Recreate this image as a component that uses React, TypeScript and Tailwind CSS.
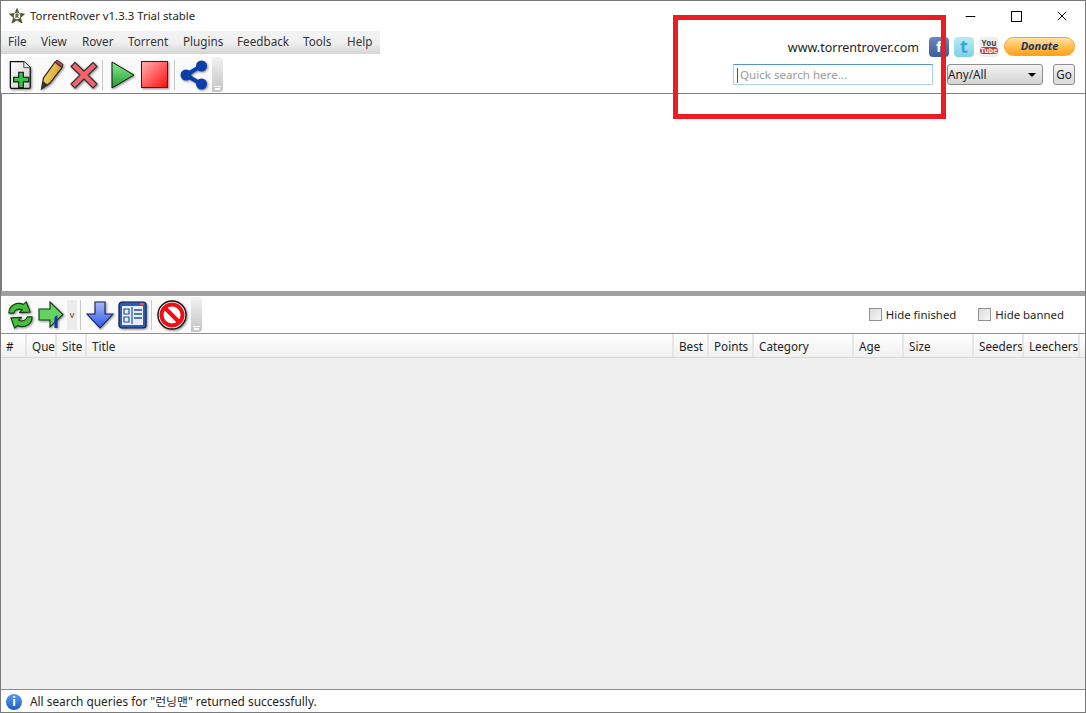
import { Minus, X } from "lucide-react";

const font = { fontFamily: '"Noto Sans", "Noto Sans CJK KR", sans-serif' };

const menus = [
  { label: "File", cls: "w-[33px]" },
  { label: "View", cls: "w-[41px]" },
  { label: "Rover", cls: "w-[46px]" },
  { label: "Torrent", cls: "w-[55px]" },
  { label: "Plugins", cls: "w-[54px]" },
  { label: "Feedback", cls: "w-[66px]" },
  { label: "Tools", cls: "w-[44px]" },
  { label: "Help", cls: "w-[33px]" },
];

const columns = [
  { label: "#", cls: "w-[26px]" },
  { label: "Queue", cls: "w-[30px]" },
  { label: "Site", cls: "w-[30px]" },
  { label: "Title", cls: "w-[587px]" },
  { label: "Best", cls: "w-[35px]" },
  { label: "Points", cls: "w-[45px]" },
  { label: "Category", cls: "w-[100px]" },
  { label: "Age", cls: "w-[50px]" },
  { label: "Size", cls: "w-[70px]" },
  { label: "Seeders", cls: "w-[50px]" },
  { label: "Leechers", cls: "w-[56px]" },
];

const Sep = () => <div className="w-px h-[30px] bg-[#c8c8c8]" />;

// little grey overflow grip at the end of each toolbar
const Grip = () => (
  <div className="w-[11px] h-[35px] rounded-r-sm bg-gradient-to-b from-[#f2f2f2] to-[#c4c4c4] flex flex-col items-center justify-end pb-[2px]">
    <div className="w-[7px] h-px bg-white mb-[1px]" />
    <div className="w-[5px] h-[2px] bg-white" />
  </div>
);

const shadow = "drop-shadow-[1px_1px_1px_rgba(0,0,0,0.45)]";

const NewIcon = () => (
  <svg width="24" height="32" viewBox="0 0 26 32" className={shadow}>
    <defs>
      <linearGradient id="pg" x1="0" y1="0" x2="1" y2="1">
        <stop offset="0" stopColor="#ffffff" />
        <stop offset="1" stopColor="#c9c9c9" />
      </linearGradient>
    </defs>
    <path d="M1.5 1.5H16L23 8V29Q23 30.5 21.5 30.5H3Q1.5 30.5 1.5 29Z" fill="url(#pg)" stroke="#111" strokeWidth="1.4" />
    <path d="M16 1.5V8H23" fill="#e8e8e8" stroke="#444" strokeWidth="1" />
    <path d="M10.5 13H15.5V18.5H21.5V23.5H15.5V29.5H10.5V23.5H5V18.5H10.5Z" fill="#39c24a" stroke="#111" strokeWidth="1.2" />
  </svg>
);

const PencilIcon = () => (
  <svg width="24" height="32" viewBox="0 0 24 32" className={shadow}>
    <defs>
      <linearGradient id="pn" x1="0" y1="0" x2="1" y2="0.4">
        <stop offset="0" stopColor="#ffe58a" />
        <stop offset="1" stopColor="#d99a1e" />
      </linearGradient>
    </defs>
    <path d="M1.5 30L3.5 19L15 3L22 8.5L10 24Z" fill="url(#pn)" stroke="#222" strokeWidth="1.2" />
    <path d="M15 3L17 1L23 5.5L22 8.5Z" fill="#c23b45" stroke="#333" strokeWidth="1" />
    <path d="M1.5 30L3 22L8 26Z" fill="#3a3026" />
  </svg>
);

const CrossIcon = () => (
  <svg width="28" height="28" viewBox="0 0 28 28" className={shadow}>
    <path d="M5 1.5L14 10L23 1.5L27 5.5L18 14L27 23L23 27L14 18L5 27L1 23L10 14L1 5.5Z" fill="#f4646c" stroke="#333" strokeWidth="1.2" strokeLinejoin="round" />
  </svg>
);

const PlayIcon = () => (
  <svg width="24" height="28" viewBox="0 0 24 28" className={shadow}>
    <defs>
      <linearGradient id="pl" x1="0" y1="0" x2="0" y2="1">
        <stop offset="0" stopColor="#8ce88c" />
        <stop offset="1" stopColor="#1f9e2f" />
      </linearGradient>
    </defs>
    <path d="M1 1L23 14L1 27Z" fill="url(#pl)" stroke="#111" strokeWidth="1" />
  </svg>
);

const StopIcon = () => (
  <svg width="27" height="27" viewBox="0 0 27 27" className={shadow}>
    <defs>
      <linearGradient id="st" x1="0" y1="0" x2="1" y2="1">
        <stop offset="0" stopColor="#ffb4b4" />
        <stop offset="1" stopColor="#ff0c0c" />
      </linearGradient>
    </defs>
    <rect x="0.5" y="0.5" width="26" height="26" fill="url(#st)" stroke="#222" />
  </svg>
);

const ShareIcon = () => (
  <svg width="28" height="30" viewBox="0 0 28 30" className={shadow}>
    <path d="M21 6L6 15L21 24" fill="none" stroke="#0b3ea8" strokeWidth="4" />
    <circle cx="21.5" cy="6" r="5.5" fill="#0b3ea8" />
    <circle cx="6" cy="15" r="5.5" fill="#0b3ea8" />
    <circle cx="21.5" cy="24" r="5.5" fill="#0b3ea8" />
  </svg>
);

const RefreshIcon = () => (
  <svg width="29" height="30" viewBox="0 0 30 30" className={shadow}>
    <path d="M3 13C3 5 11 1 18 4L21 1.5L25 12L14 12.5L17 9.5C13 8 9 9.5 8 13Z" fill="#46c03c" stroke="#123d12" strokeWidth="1.2" strokeLinejoin="round" />
    <path d="M27 17C27 25 19 29 12 26L9 28.5L5 18L16 17.5L13 20.5C17 22 21 20.5 22 17Z" fill="#46c03c" stroke="#123d12" strokeWidth="1.2" strokeLinejoin="round" />
  </svg>
);

const ForwardIcon = () => (
  <svg width="26" height="28" viewBox="0 0 26 28" className={shadow}>
    <path d="M1 8H12V1L25 13.5L12 26V19H1Z" fill="#63d25f" stroke="#113d11" strokeWidth="1.1" />
    <path d="M16.5 27V16L19.5 14V27Z" fill="#1b2fb0" />
  </svg>
);

const DownIcon = () => (
  <svg width="28" height="28" viewBox="0 0 28 28" className={shadow}>
    <defs>
      <linearGradient id="dn" x1="0" y1="0" x2="0" y2="1">
        <stop offset="0" stopColor="#a6bcfb" />
        <stop offset="1" stopColor="#2f55e8" />
      </linearGradient>
    </defs>
    <path d="M9 1H19V13H27L14 27L1 13H9Z" fill="url(#dn)" stroke="#15204f" strokeWidth="1.1" />
  </svg>
);

const DetailsIcon = () => (
  <svg width="29" height="28" viewBox="0 0 29 28" className={shadow}>
    <rect x="1" y="1" width="27" height="26" rx="3" fill="#2d5cb4" stroke="#0e1e46" strokeWidth="1.2" />
    <rect x="4" y="5" width="21" height="19" fill="#e6effb" />
    <path d="M6 8H11V13H6ZM6 16H11V21H6Z" fill="none" stroke="#234c9c" strokeWidth="1.2" />
    <path d="M14 6V23" stroke="#234c9c" strokeWidth="1.2" />
    <path d="M16 9H24M16 13H24M16 17H24" stroke="#234c9c" strokeWidth="1.6" />
    <rect x="22" y="2" width="4" height="2" fill="#e25757" />
  </svg>
);

const BanIcon = () => (
  <svg width="30" height="30" viewBox="0 0 30 30" className={shadow}>
    <circle cx="15" cy="15" r="14" fill="#fff" stroke="#111" strokeWidth="1.4" />
    <circle cx="15" cy="15" r="10.5" fill="none" stroke="#ee0f14" strokeWidth="4" />
    <path d="M7.5 7.5L22.5 22.5" stroke="#ee0f14" strokeWidth="4" />
  </svg>
);

const LogoIcon = () => (
  <svg width="16" height="16" viewBox="0 0 16 16">
    <path d="M8 0.5L10 5.5L15.5 6L11.5 9.5L13 15L8 12L3 15L4.5 9.5L0.5 6L6 5.5Z" fill="#54691c" stroke="#222" strokeWidth="0.6" />
    <circle cx="8" cy="8" r="3.2" fill="#f7f7ef" />
    <path d="M7 6V10M7 6H9V8H7M8 8L9.5 10" fill="none" stroke="#222" strokeWidth="0.8" />
  </svg>
);

const Checkbox = () => (
  <div className="w-[13px] h-[13px] border border-[#8e8f8f] bg-gradient-to-br from-[#dcdcdc] to-[#f7f7f7]" />
);

export default function App() {
  return (
    <div
      className="relative w-[1086px] h-[713px] flex flex-col overflow-hidden bg-white border border-[#7a7a7a] text-[11.7px] text-[#1e1e1e]"
      style={font}
    >
      {/* header */}
      <div className="h-[92px] flex justify-between shrink-0">
        <div className="flex flex-col">
          <div className="h-[30px] flex items-center pl-[8px] gap-[5px] text-[11.4px]">
            <LogoIcon />
            <span>TorrentRover v1.3.3 Trial stable</span>
          </div>
          <div className="w-[379px] h-[23px] flex items-center pl-[7px] pb-[2px] bg-gradient-to-b from-[#f3f3f3] via-[#f0f0f0] to-[#d5d5d5] text-[#333]">
            {menus.map((m) => (
              <div key={m.label} className={m.cls}>
                {m.label}
              </div>
            ))}
          </div>
          <div className="flex items-center mt-[3px] pl-[3px]">
            <div className="flex items-center w-[208px] h-[35px] pl-[5px] bg-[#fafafa] rounded-l-sm">
              <NewIcon />
              <div className="ml-[7px]">
                <PencilIcon />
              </div>
              <div className="ml-[6px]">
                <CrossIcon />
              </div>
              <div className="ml-[4px]">
                <Sep />
              </div>
              <div className="ml-[8px]">
                <PlayIcon />
              </div>
              <div className="ml-[6px]">
                <StopIcon />
              </div>
              <div className="ml-[6px]">
                <Sep />
              </div>
              <div className="ml-[5px]">
                <ShareIcon />
              </div>
            </div>
            <Grip />
          </div>
        </div>

        <div className="flex flex-col items-end">
          <div className="flex">
            <div className="flex items-center justify-center w-[46px] h-[30px]">
              <Minus size={15} strokeWidth={1.7} className="text-black" />
            </div>
            <div className="flex items-center justify-center w-[46px] h-[30px]">
              <div className="w-[11px] h-[11px] border border-black" />
            </div>
            <div className="flex items-center justify-center w-[46px] h-[30px]">
              <X size={16} strokeWidth={1.5} className="text-black" />
            </div>
          </div>
          <div className="flex items-center mt-[5px] pr-[10px] h-[21px]">
            <span className="text-[12.5px] text-[#1c1c1c] mr-[10px] pt-[3px]">www.torrentrover.com</span>
            <div className="w-[20px] h-[20px] rounded-sm bg-gradient-to-b from-[#6d88bb] to-[#3e5b99] flex items-center justify-center text-white font-bold text-[15px] mr-[5px]">
              f
            </div>
            <div className="w-[20px] h-[20px] rounded-sm bg-gradient-to-b from-[#b8ecf2] to-[#7fd0e4] flex items-center justify-center text-[#3aa4d8] font-bold text-[18px] mr-[5px]">
              t
            </div>
            <div className="w-[20px] h-[20px] rounded-sm bg-[#eeeeee] flex flex-col items-center justify-center leading-none mr-[5px]">
              <span className="text-[8px] font-bold text-[#444]">You</span>
              <span className="text-[7px] font-bold text-white bg-[#c8383a] rounded-sm px-px">Tube</span>
            </div>
            <div className="w-[71px] h-[19px] rounded-full border border-[#f5a623] bg-gradient-to-b from-[#ffe2a6] via-[#ffc14d] to-[#ff9f1a] flex items-center justify-center italic font-bold text-[11px] text-[#17386e]">
              Donate
            </div>
          </div>
          <div className="flex items-center mt-[7px] pr-[10px]">
            <div className="w-[200px] h-[21px] border border-[#a9d3ee] border-t-[#5a93c6] flex items-center pl-[3px] pt-[1px] mr-[14px] text-[#9a9a9a] text-[11.6px]">
              <div className="w-px h-[15px] bg-[#555] mr-[2px]" />
              Quick search here...
            </div>
            <div className="w-[96px] h-[21px] border border-[#8d8d8d] rounded-[3px] bg-gradient-to-b from-[#f4f4f4] to-[#d2d2d2] flex items-center justify-between pt-[1px] pr-[6px] mr-[10px] text-[#222]">
              <span>Any/All</span>
              <div className="w-0 h-0 border-x-[4px] border-x-transparent border-t-[4px] border-t-black" />
            </div>
            <div className="w-[22px] h-[21px] border border-[#8d8d8d] rounded-[3px] bg-gradient-to-b from-[#f4f4f4] to-[#dadada] flex items-center justify-center pt-[1px] text-[#222]">
              Go
            </div>
          </div>
        </div>
      </div>

      {/* rovers pane */}
      <div className="h-[198px] shrink-0 border-t border-l border-[#808080] bg-white" />
      <div className="h-[5px] shrink-0 bg-[#a0a0a0]" />

      {/* results toolbar */}
      <div className="h-[37px] shrink-0 flex items-center justify-between pl-[4px] pr-[21px]">
        <div className="flex items-center">
          <div className="flex items-center w-[186px] h-[35px] pl-[1px] bg-[#fafafa] rounded-l-sm">
            <RefreshIcon />
            <div className="ml-[3px]">
              <ForwardIcon />
            </div>
            <div className="w-[10px] h-[30px] ml-[3px] bg-[#ececec] flex items-center justify-center text-[9px] text-[#5a3a10]">
              v
            </div>
            <div className="ml-[3px]">
              <Sep />
            </div>
            <div className="ml-[5px]">
              <DownIcon />
            </div>
            <div className="ml-[4px]">
              <DetailsIcon />
            </div>
            <div className="ml-[4px]">
              <Sep />
            </div>
            <div className="ml-[5px]">
              <BanIcon />
            </div>
          </div>
          <Grip />
        </div>
        <div className="flex items-center">
          <Checkbox />
          <span className="ml-[4px] text-[11.4px]">Hide finished</span>
          <div className="ml-[22px]">
            <Checkbox />
          </div>
          <span className="ml-[4px] text-[11.4px]">Hide banned</span>
        </div>
      </div>

      {/* results grid */}
      <div className="flex-1 flex flex-col border-t border-[#7397bd] bg-[#efefef]">
        <div className="h-[24px] shrink-0 flex bg-gradient-to-b from-white to-[#f0f0f0] border-b border-[#d8d8d8]">
          {columns.map((c) => (
            <div
              key={c.label}
              className={`${c.cls} shrink-0 overflow-hidden whitespace-nowrap flex items-center pl-[5px] pt-[3px] border-r-2 border-[#e6e6e6]`}
            >
              {c.label}
            </div>
          ))}
        </div>
      </div>

      {/* status */}
      <div className="h-[23px] shrink-0 flex items-center gap-[8px] pl-[5px] pt-[1px] border-t border-[#8c8c8c] bg-white text-[11.85px]">
        <div className="w-[16px] h-[16px] rounded-full bg-gradient-to-b from-[#5b9bea] to-[#1c5fc4] flex items-center justify-center text-white font-bold text-[12px]">
          i
        </div>
        <span>All search queries for "런닝맨" returned successfully.</span>
      </div>

      {/* red annotation drawn over the screenshot */}
      <div className="absolute left-[672px] top-[14px] w-[273px] h-[104px] border-[5px] border-[#ed1c24] pointer-events-none" />
    </div>
  );
}
